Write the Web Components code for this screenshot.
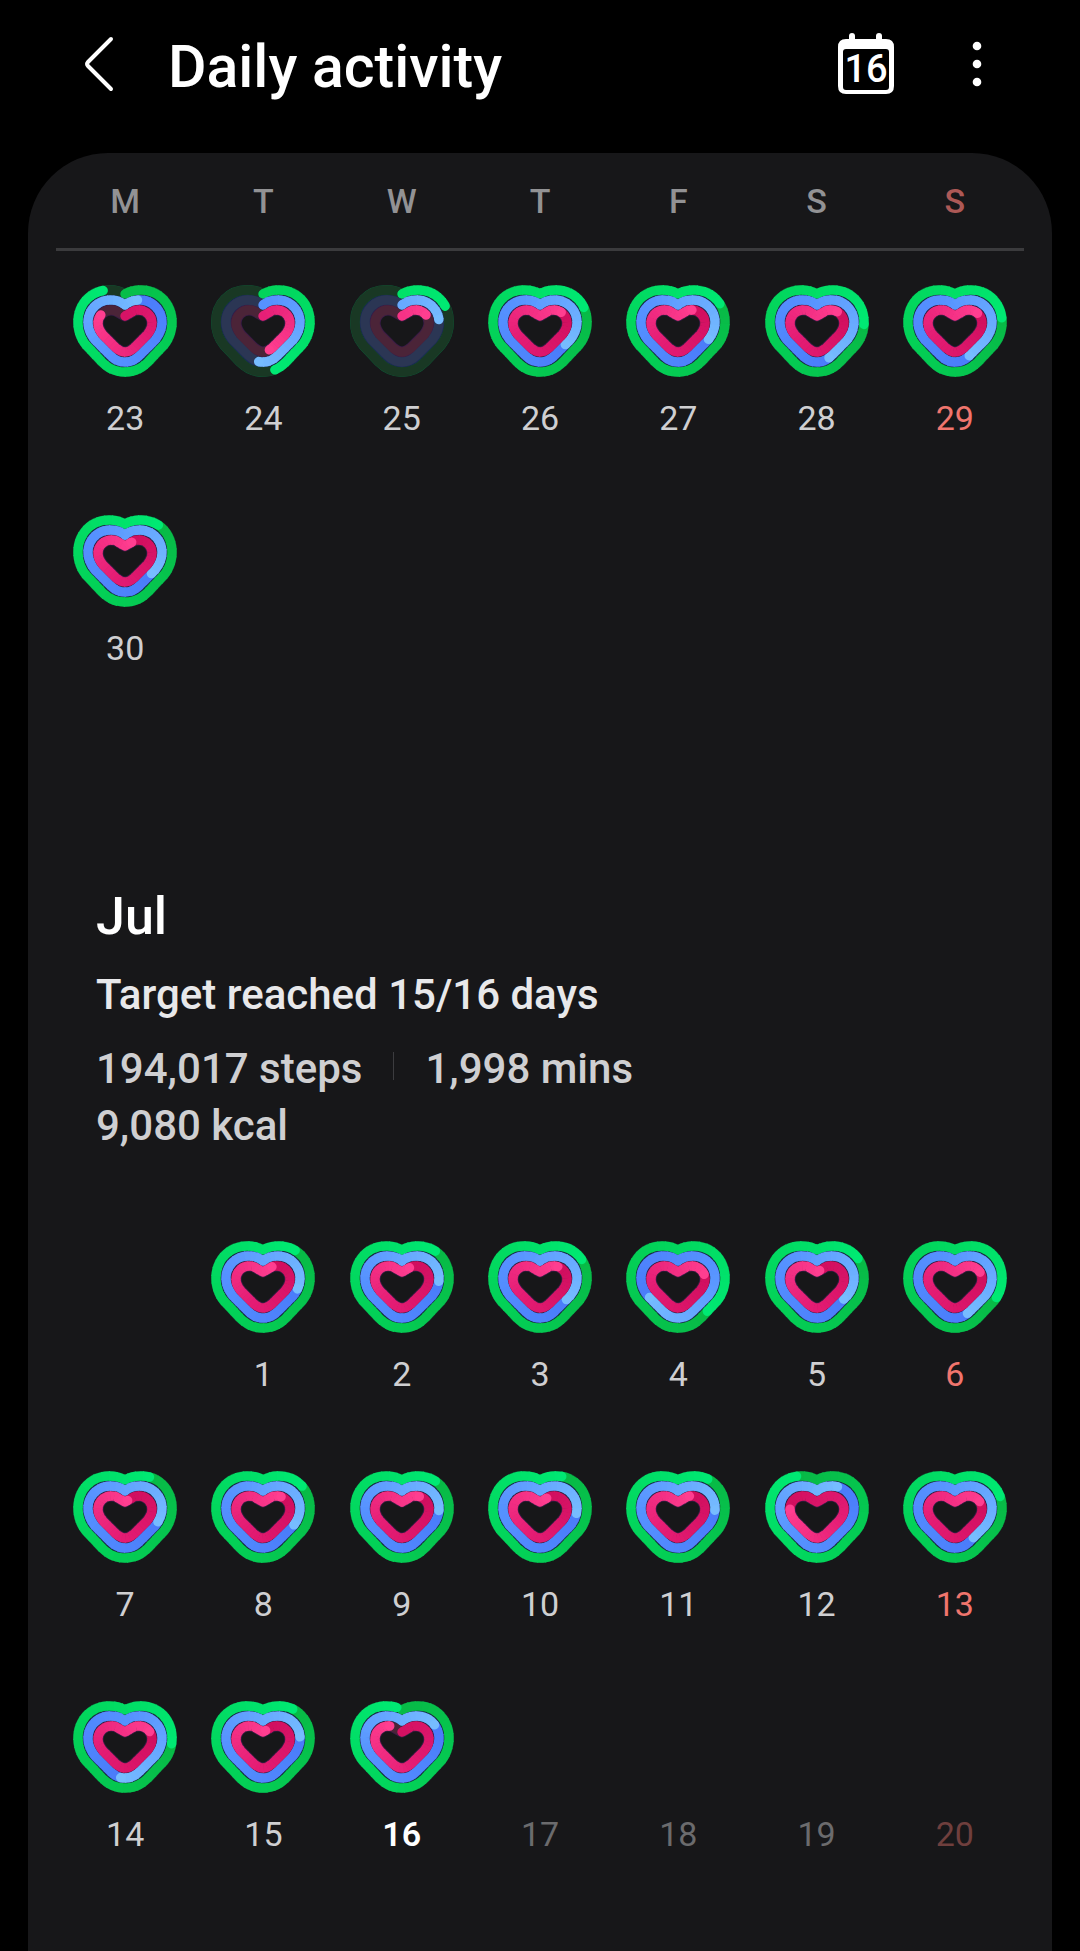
<!DOCTYPE html>
<html lang="en">
<head>
<meta charset="utf-8">
<meta name="viewport" content="width=device-width, initial-scale=1">
<title>Daily activity</title>
<style>
    body {
        margin: 0;
        background: #000;
        font-family: Roboto, "Noto Sans", sans-serif;
        color: #cfcfd1;
    }
</style>
</head>
<body>
<activity-app></activity-app>

<script>
const WEEKDAYS = ['Monday', 'Tuesday', 'Wednesday', 'Thursday', 'Friday', 'Saturday', 'Sunday'];

// [day, steps %, active time %, calories %]
const JUNE = [
    [23, 92, 106.4, 82.5],
    [24, 45.7, 52, 45.4],
    [25, 17.8, 22.2, 17.5],
    [26, 118.3, 135.4, 115],
    [27, 116.8, 132, 110],
    [28, 124.5, 144, 114.3],
    [29, 122.2, 142.6, 116],
    [30, 112.5, 134.7, 105]
];
const JULY = [
    [1, 112, 128.5, 106.5],
    [2, 112.5, 124.8, 105.5],
    [3, 116.7, 134.7, 112.5],
    [4, 137.5, 166.7, 120],
    [5, 116.3, 134.5, 102],
    [6, 131, 143.7, 118.5],
    [7, 109, 130, 102],
    [8, 115.2, 131.7, 112.7],
    [9, 112.5, 124.5, 112.2],
    [10, 108, 125.8, 105],
    [11, 111, 124.3, 108.5],
    [12, 192.5, 110, 176.8],
    [13, 119.5, 140, 118],
    [14, 125.7, 152, 118],
    [15, 111, 122.8, 102],
    [16, 98, 116.8, 91],
    [17], [18], [19], [20]
];

// outlines start in the notch and run clockwise, one lap each
const RINGS = [
    {
        name: 'steps',
        path: 'M52 9C57 6 62 5 68 5C86 5 99 19 99 37C99 46 96 54 91 60L75 77C68 84 61 87 52 87C43 87 36 84 29 77L13 60C8 54 5 46 5 37C5 19 18 5 36 5C42 5 47 6 52 9',
        track: '#193824',
        colors: [[0, 233, 115], [3, 210, 88], [8, 186, 70]]
    },
    {
        name: 'time',
        path: 'M52 20C57 16 61 15 67 15C79 15 89 25 89 37C89 44 86 50 82 55L67 70C62 75 58 77 52 77C46 77 42 75 37 70L22 55C18 50 15 44 15 37C15 25 25 15 37 15C43 15 47 16 52 20',
        track: '#2b3654',
        colors: [[118, 188, 255], [86, 146, 255], [74, 124, 250]]
    },
    {
        name: 'calories',
        path: 'M52 31L59 27C62 25 63 25 66 25C73 25 79 31 79 38C79 43 77 46 74 50L61 63C57 66 55 67 52 67C49 67 47 66 43 63L30 50C27 46 25 43 25 38C25 31 31 25 38 25C41 25 42 25 45 27L52 31',
        track: '#4b2438',
        colors: [[255, 62, 144], [228, 28, 116], [208, 14, 94]]
    }
];

const mix = (colors, t) => {
    const [from, to] = t < 0.5 ? [colors[0], colors[1]] : [colors[1], colors[2]];
    const k = t < 0.5 ? t * 2 : t * 2 - 1;
    return `rgb(${from.map((c, i) => Math.round(c + (to[i] - c) * k)).join()})`;
}

const drawRing = (ring, value) => {
    // two laps in one path, so that a dash can run across the notch
    const d = ring.path + ring.path.replace(/^M\d+ \d+/, '');
    const start = Math.max(0, value - 100);
    const length = value - start;
    const count = Math.ceil(length / 2.5);
    const step = length / count;
    const dash = (from, size, color, cap) =>
        `<path d="${d}" pathLength="200" stroke="${color}" stroke-linecap="${cap}" stroke-dasharray="${size.toFixed(2)} 400" stroke-dashoffset="${(-from).toFixed(2)}"/>`;

    let out = `<path d="${ring.path}Z" stroke="${ring.track}"/>`;
    if (value <= 100) {
        out += dash(start, 0.01, mix(ring.colors, length / 100), 'round');
    }
    for (let i = 0; i < count; i++) {
        const size = i < count - 1 ? step + 0.4 : step;
        out += dash(start + i * step, size, mix(ring.colors, (length - i * step) / 100), 'butt');
    }
    return out + dash(value - 0.01, 0.01, mix(ring.colors, 0), 'round');
}

class ActivityHeart extends HTMLElement {
    constructor() {
        super();
        this.attachShadow({mode: 'open'});
    }

    connectedCallback() {
        this.shadowRoot.innerHTML = `
        <style>
            :host {
                display: block;
            }
            svg {
                display: block;
                width: 104px;
                height: 93px;
            }
        </style>
        <svg viewBox="0 0 104 93" fill="none" stroke-width="9.4" stroke-linejoin="round" aria-hidden="true">
            <path d="${RINGS[0].path}Z" stroke="#0c5a38" stroke-width="10"/>
            <path d="${RINGS[1].path}Z" stroke="#1b2c55" stroke-width="11"/>
            <path d="${RINGS[2].path}Z" stroke="#3a1c48" stroke-width="11"/>
            ${RINGS.map(ring => drawRing(ring, Number(this.getAttribute(ring.name)))).join('')}
        </svg>`;
    }
}

class DayCell extends HTMLElement {
    constructor() {
        super();
        this.attachShadow({mode: 'open'});
    }

    connectedCallback() {
        this.shadowRoot.innerHTML = `
        <style>
            :host {
                display: block;
            }
            button {
                display: flex;
                flex-direction: column;
                justify-content: flex-end;
                align-items: center;
                gap: 20px;
                width: 100%;
                height: 100%;
                min-height: 153px;
                margin: 0;
                padding: 0;
                border: 0;
                background: none;
                font: inherit;
                font-size: 34px;
                line-height: 40px;
                color: inherit;
            }
            :host([sunday]) button {
                color: #f0756d;
            }
            :host([future]) button {
                color: #6b6b6d;
            }
            :host([future][sunday]) button {
                color: #6f3f3d;
            }
            :host([today]) button {
                color: #fff;
                font-weight: 600;
            }
        </style>
        <button type="button"><slot name="heart"></slot><span><slot></slot></span></button>`;
    }
}

class MonthGrid extends HTMLElement {
    constructor() {
        super();
        this.attachShadow({mode: 'open'});
    }

    // first = column of the first day, Monday is 0
    set data({days, first, today}) {
        const cells = days.map(([day, ...values], i) => {
            const column = (first + i) % 7;
            const flags = [
                column === 6 ? 'sunday' : '',
                values.length ? '' : 'future',
                day === today ? 'today' : ''
            ].join(' ');
            const place = i === 0 ? `style="grid-column-start: ${column + 1}"` : '';
            const heart = values.length
                ? `<activity-heart slot="heart" steps="${values[0]}" time="${values[1]}" calories="${values[2]}"></activity-heart>`
                : '';
            return `<day-cell ${flags} ${place}>${heart}${day}</day-cell>`;
        });
        this.shadowRoot.innerHTML = `
        <style>
            :host {
                display: grid;
                grid-template-columns: repeat(7, 1fr);
                row-gap: 77px;
            }
        </style>
        ${cells.join('')}`;
    }
}

class MonthSummary extends HTMLElement {
    constructor() {
        super();
        this.attachShadow({mode: 'open'});
        this.shadowRoot.innerHTML = `
        <style>
            :host {
                display: block;
                padding: 0 40px;
                font-size: 42px;
                font-weight: 500;
                line-height: 57px;
            }
            h2 {
                margin: 0 0 17px;
                font-size: 52px;
                font-weight: 500;
                line-height: 64px;
                color: #fff;
            }
            p {
                margin: 0 0 17px;
                color: #e8e8ea;
            }
            .totals {
                display: flex;
                flex-wrap: wrap;
                column-gap: 31px;
                max-width: 620px;
            }
            .rule {
                width: 1px;
                height: 28px;
                margin-top: 12px;
                background: #3c3c3f;
            }
        </style>
        <h2><slot name="month"></slot></h2>
        <p><slot name="target"></slot></p>
        <div class="totals">
            <slot name="steps"></slot>
            <span class="rule"></span>
            <slot name="time"></slot>
            <slot name="calories"></slot>
        </div>`;
    }
}

class WeekHeader extends HTMLElement {
    constructor() {
        super();
        this.attachShadow({mode: 'open'});
        this.shadowRoot.innerHTML = `
        <style>
            :host {
                display: grid;
                grid-template-columns: repeat(7, 1fr);
                padding: 28px 0 27px;
                border-bottom: 3px solid #3b3b3d;
                font-size: 34px;
                font-weight: 500;
                line-height: 40px;
                text-align: center;
                color: #929294;
            }
            span:last-child {
                color: #ad5956;
            }
        </style>
        ${WEEKDAYS.map(day => `<span title="${day}">${day[0]}</span>`).join('')}`;
    }
}

class AppHeader extends HTMLElement {
    constructor() {
        super();
        this.attachShadow({mode: 'open'});
        this.shadowRoot.innerHTML = `
        <style>
            :host {
                display: flex;
                align-items: center;
                padding: 17px 79px 42px 80px;
                color: #fff;
            }
            h1 {
                flex: 1;
                margin: 0;
                padding: 6px 0 0 48px;
                font-size: 59px;
                font-weight: 500;
                line-height: 88px;
            }
            button {
                display: block;
                margin: 0;
                padding: 0;
                border: 0;
                background: none;
                color: inherit;
            }
            svg {
                display: block;
            }
            .more {
                margin-left: 67px;
            }
            text {
                font-family: Roboto, "Noto Sans", sans-serif;
                font-size: 38px;
                font-weight: 500;
            }
        </style>
        <button type="button" aria-label="Back">
            <svg width="40" height="56" viewBox="0 0 40 56" fill="none" stroke="currentColor" stroke-width="4" stroke-linecap="round" stroke-linejoin="round">
                <path d="M31 3L8 26Q6 28 8 30L31 53"/>
            </svg>
        </button>
        <h1><slot></slot></h1>
        <button type="button" aria-label="Today">
            <svg width="56" height="62" viewBox="0 0 56 62" fill="currentColor">
                <rect x="11" y="0" width="6" height="12" rx="3"/>
                <rect x="38" y="0" width="6" height="12" rx="3"/>
                <path fill-rule="evenodd" d="M8 6H48Q56 6 56 14V53Q56 61 48 61H8Q0 61 0 53V14Q0 6 8 6ZM8 16Q5 16 5 19V54Q5 57 8 57H48Q51 57 51 54V19Q51 16 48 16Z"/>
                <text x="28" y="49" text-anchor="middle">16</text>
            </svg>
        </button>
        <button class="more" type="button" aria-label="More options">
            <svg width="40" height="56" viewBox="0 0 40 56" fill="currentColor">
                <circle cx="16" cy="10" r="4.3"/>
                <circle cx="16" cy="28" r="4.3"/>
                <circle cx="16" cy="46" r="4.3"/>
            </svg>
        </button>`;
    }
}

class ActivityApp extends HTMLElement {
    constructor() {
        super();
        this.attachShadow({mode: 'open'});
    }

    connectedCallback() {
        this.render();
        this.shadowRoot.querySelector('.june').data = {days: JUNE, first: 0};
        this.shadowRoot.querySelector('.july').data = {days: JULY, first: 1, today: 16};
    }

    render() {
        this.shadowRoot.innerHTML = `
        <style>
            :host {
                display: flex;
                flex-direction: column;
                min-height: 100vh;
            }
            main {
                flex: 1;
                margin: 0 28px;
                padding: 0 28px 90px;
                border-radius: 80px 80px 0 0;
                background: #171719;
            }
            .june {
                margin-top: 34px;
            }
            month-summary {
                margin: 217px 0 87px;
            }
        </style>
        <app-header>Daily activity</app-header>
        <main>
            <week-header></week-header>
            <month-grid class="june"></month-grid>
            <month-summary>
                <span slot="month">Jul</span>
                <span slot="target">Target reached 15/16 days</span>
                <span slot="steps">194,017 steps</span>
                <span slot="time">1,998 mins</span>
                <span slot="calories">9,080 kcal</span>
            </month-summary>
            <month-grid class="july"></month-grid>
        </main>`;
    }
}

customElements.define('activity-heart', ActivityHeart);
customElements.define('day-cell', DayCell);
customElements.define('month-grid', MonthGrid);
customElements.define('month-summary', MonthSummary);
customElements.define('week-header', WeekHeader);
customElements.define('app-header', AppHeader);
customElements.define('activity-app', ActivityApp);
</script>
</body>
</html>
